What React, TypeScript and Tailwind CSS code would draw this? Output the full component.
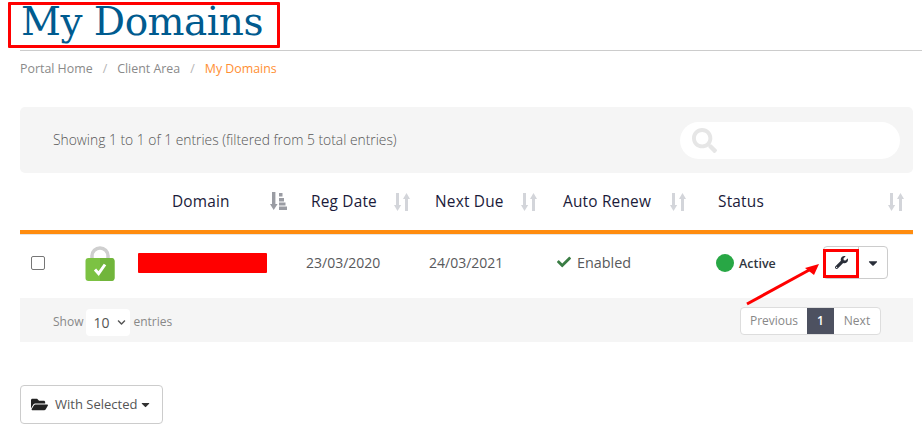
import { FaWrench, FaCheck, FaFolderOpen, FaCaretDown, FaChevronDown, FaSearch } from "react-icons/fa";

const cols = "grid grid-cols-[110px_168px_123px_128px_155px_1fr]";

function Sort() {
  return (
    <svg width="16" height="18" viewBox="0 0 16 18" fill="#d3d5da">
      <path d="M2 0h3v12h2.2L3.5 18 0 12h2z" />
      <path d="M11 18h3V6h2L12.5 0 9 6h2z" />
    </svg>
  );
}

function SortActive() {
  return (
    <svg width="17" height="18" viewBox="0 0 17 18" fill="#9a9ca3">
      <path d="M2 0h3.4v12h2.2L3.7 18 0 12h2z" />
      <rect x="9" y="1" width="3.5" height="3.5" />
      <rect x="9" y="6" width="5" height="3.5" />
      <rect x="9" y="10.5" width="6.5" height="3" />
      <rect x="9" y="14.5" width="8" height="3.5" />
    </svg>
  );
}

function Head({ label, pl, icon }: { label: string; pl: string; icon: string }) {
  return (
    <div className={`flex items-center justify-between h-full ${pl} ${icon}`}>
      <span>{label}</span>
      <Sort />
    </div>
  );
}

export default function App() {
  return (
    <div className="relative w-[922px] h-[432px] overflow-hidden bg-white text-[13px] text-[#58595b] font-['Open_Sans',sans-serif]">
      <header className="ml-5 h-[51px] border-b border-[#cccccc]">
        <h1 className="ml-px font-['DejaVu_Serif',serif] text-[39px] leading-[43px] text-[#005b8f] tracking-[-0.5px]">My Domains</h1>
      </header>
      <nav className="ml-5 mt-[9px] h-[18px] flex items-center text-[12.4px] text-[#8a8a8a]">
        <span>Portal Home</span>
        <span className="mx-[10px] text-[#b5b5b5]">/</span>
        <span>Client Area</span>
        <span className="mx-[10px] text-[#b5b5b5]">/</span>
        <span className="text-[#ff8f33]">My Domains</span>
      </nav>

      <main className="ml-5 w-[893px] mt-[29px]">
        <section className="h-[66px] bg-[#f5f5f5] rounded-[5px] flex items-center justify-between pl-[33px] pr-[13px]">
          <span className="text-[13.85px] font-light text-[#555555]">Showing 1 to 1 of 1 entries (filtered from 5 total entries)</span>
          <div className="w-[220px] h-[37px] bg-white rounded-full flex items-center pl-3 text-[#e6e6e6] text-[25px]">
            <FaSearch />
          </div>
        </section>

        <div className={`${cols} h-[57px] items-center text-[15.4px] font-medium text-[#1b1b3a] tracking-[0.2px]`}>
          <div />
          <div className="flex items-center justify-between pl-[42px] pr-[11px]">
            <span>Domain</span>
            <SortActive />
          </div>
          <Head label="Reg Date" pl="pl-[13px]" icon="pr-[11px]" />
          <Head label="Next Due" pl="pl-[14px]" icon="pr-[12px]" />
          <Head label="Auto Renew" pl="pl-[14px]" icon="pr-[18px]" />
          <Head label="Status" pl="pl-[14px]" icon="pr-[9px]" />
        </div>

        <div className="h-[4px] bg-[#ff8c0f]" />
        <div className={`${cols} h-[64px] pb-[8px] items-center border-t border-[#e5e5e5] text-[14px]`}>
          <div className="flex items-center">
            <span className="ml-[11px] w-[14px] h-[14px] rounded-[2px] border border-[#767676] bg-white" />
            <svg className="ml-[40px] mt-[1px]" width="30" height="36" viewBox="0 0 30 36">
              <path d="M7 16V11a8 8 0 0 1 16 0v5" fill="none" stroke="#cfcfcf" strokeWidth="3.5" />
              <rect x="0.5" y="13" width="29" height="23" rx="3" fill="#7cc243" />
              <path d="M15 13h12a3 3 0 0 1 2.5 3v17a3 3 0 0 1-2.5 3H15z" fill="#71b53b" />
              <path d="M10 24.5l3.6 4L20 19.5" fill="none" stroke="#fff" strokeWidth="3" />
            </svg>
          </div>
          <div className="pl-2">
            <div className="w-[129px] h-5 bg-[#ff0000] rounded-[1px]" />
          </div>
          <div className="pl-2">23/03/2020</div>
          <div className="pl-2">24/03/2021</div>
          <div className="pl-2 flex items-center gap-[6px]">
            <FaCheck className="text-[#3a7d44] text-[14px]" />
            <span className="text-[14.4px]">Enabled</span>
          </div>
          <div className="flex items-center justify-between pl-3 pr-[25px]">
            <div className="flex items-center gap-[5px]">
              <span className="w-[18px] h-[18px] rounded-full bg-[#28a745]" />
              <span className="pt-[3px] text-[12.5px] font-semibold text-[#2f3640]">Active</span>
            </div>
            <div className="flex h-[33px] border border-[#cccccc] rounded-[4px] text-[#2a2f3a]">
              <span className="w-[35px] flex items-center justify-center border-r border-[#cccccc] text-[13px]"><FaWrench /></span>
              <span className="w-7 flex items-center justify-center text-[14px]"><FaCaretDown /></span>
            </div>
          </div>
        </div>

        <section className="h-[44px] bg-[#f5f5f5] flex items-center justify-between pl-[33px] pr-[32px] text-[12px] text-[#888888]">
          <div className="flex items-center mt-[4px]">
            <span>Show</span>
            <span className="mt-[1px] ml-[3px] mr-[3px] w-11 h-[27px] bg-white rounded-[4px] flex items-center pl-[7px] gap-2 text-[14px] text-[#555555]">
              10 <FaChevronDown className="text-[9px]" />
            </span>
            <span>entries</span>
          </div>
          <div className="flex h-7 mt-[1px] bg-white border border-[#dddddd] rounded-[4px] overflow-hidden items-stretch">
            <span className="w-[66px] flex items-center justify-center">Previous</span>
            <span className="w-[27px] flex items-center justify-center bg-[#4d5160] text-white font-semibold">1</span>
            <span className="w-[46px] flex items-center justify-center">Next</span>
          </div>
        </section>

        <button className="mt-[43px] w-[143px] h-[39px] bg-white border border-[#cccccc] rounded-[4px] flex items-center pl-[10px] gap-[7px] text-[13px] text-[#555555]">
          <FaFolderOpen className="text-[#222222] text-[17px]" />
          <span className="flex items-center gap-[2px]">With Selected <FaCaretDown className="text-[#333333] text-[13px]" /></span>
        </button>
      </main>

      <div className="absolute left-2 top-[2px] w-[272px] h-[46px] border-[3px] border-[#ff0000] rounded-[1px]" />
      <div className="absolute left-[823px] top-[249px] w-[36px] h-[29px] border-[3px] border-[#ff0000]" />
      <svg className="absolute left-[745px] top-[260px]" width="80" height="46" viewBox="0 0 80 46">
        <path d="M2 44L66 9" stroke="#ff0000" strokeWidth="3" fill="none" />
        <path d="M74 4L60 8L69 15z" fill="#ff0000" />
      </svg>
    </div>
  );
}
